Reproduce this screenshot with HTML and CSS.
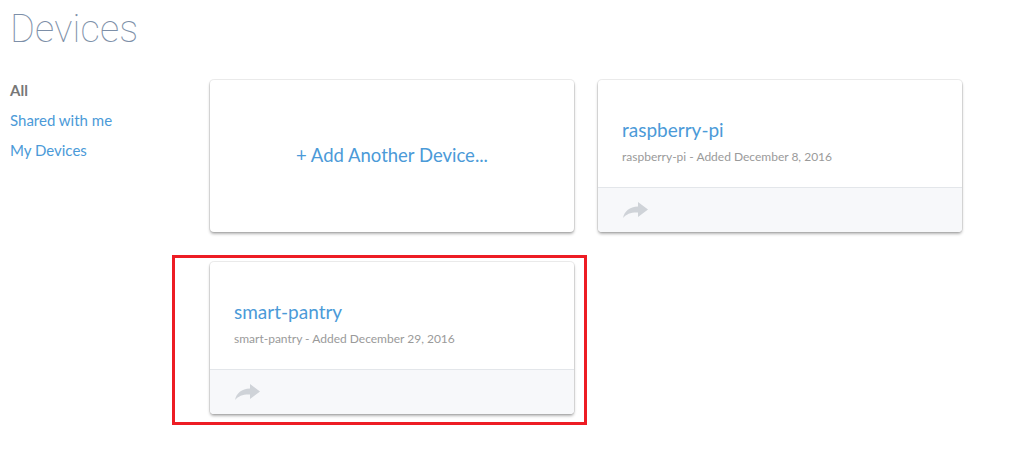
FILE: index.html
```html
<!DOCTYPE html>
<html>
<head>
<meta charset="utf-8">
<link rel="stylesheet" href="styles.css">
</head>
<body>
<h1 class="page-title">Devices</h1>
<div class="layout">
  <nav class="sidebar">
    <a class="nav-item active">All</a>
    <a class="nav-item">Shared with me</a>
    <a class="nav-item">My Devices</a>
  </nav>
  <div class="grid">
    <div class="card add-card">
      <a class="add-link">+ Add Another Device...</a>
    </div>
    <div class="card">
      <div class="card-body">
        <div class="card-title">raspberry-pi</div>
        <div class="card-sub">raspberry-pi - Added December 8, 2016</div>
      </div>
      <div class="card-footer">
        <svg class="share" width="26" height="16" viewBox="0 0 26 16"><path d="M16 0 L26 7.5 L16 15 L16 10.5 C9 10.2 4.5 12 1 16 C2.5 9 7.5 5 16 4.5 Z" fill="#cfd3d8"/></svg>
      </div>
    </div>
    <div class="cell">
      <div class="card">
        <div class="card-body">
          <div class="card-title">smart-pantry</div>
          <div class="card-sub">smart-pantry - Added December 29, 2016</div>
        </div>
        <div class="card-footer">
          <svg class="share" width="26" height="16" viewBox="0 0 26 16"><path d="M16 0 L26 7.5 L16 15 L16 10.5 C9 10.2 4.5 12 1 16 C2.5 9 7.5 5 16 4.5 Z" fill="#cfd3d8"/></svg>
        </div>
      </div>
      <div class="highlight"></div>
    </div>
  </div>
</div>
</body>
</html>
```
FILE: styles.css
```css
html, body { margin: 0; padding: 0; background: #fff; }
body { font-family: "Source Sans Pro", Lato, "Open Sans", sans-serif; padding-bottom: 30px; }
.page-title {
  margin: 0;
  padding: 7px 0 0 10px;
  font-family: Roboto, "Liberation Sans", sans-serif;
  font-weight: 100;
  font-size: 38px;
  line-height: 44px;
  color: #7d8fa8;
  letter-spacing: 0.2px;
}
.layout { display: flex; padding-top: 29px; }
.sidebar { width: 210px; display: flex; flex-direction: column; padding-left: 10px; box-sizing: border-box; }
.nav-item { font-size: 15px; line-height: 30px; color: #4b9ad8; margin-top: -5px; margin-bottom: 5px; }
.nav-item.active { color: #777; font-weight: bold; }
.grid { display: grid; grid-template-columns: 364px 364px; column-gap: 24px; row-gap: 30px; }
.cell { position: relative; }
.card {
  height: 152px;
  background: #fff;
  border-radius: 4px;
  box-shadow: 0 0 0 1px rgba(0,0,0,0.07), 0 2px 3px rgba(0,0,0,0.3);
  display: flex;
  flex-direction: column;
  box-sizing: border-box;
}
.add-card { align-items: center; justify-content: center; }
.add-link { font-size: 18.5px; color: #4b9ad8; margin-top: -2px; }
.card-body { height: 108px; box-sizing: border-box; padding: 37px 24px 0; border-bottom: 1px solid #e3e6ea; }
.card-title { font-size: 19px; line-height: 26px; color: #4b9ad8; }
.card-sub { font-size: 12px; line-height: 16px; color: #9a9a9a; margin-top: 6px; }
.card-footer { flex: 1; background: #f7f8fa; border-radius: 0 0 4px 4px; padding: 14px 24px 0; box-sizing: border-box; }
.share { display: block; }
.highlight {
  position: absolute;
  left: -38px; top: -7px; right: -13px; bottom: -11px;
  border: 3px solid #ed1c24;
  pointer-events: none;
}
```
